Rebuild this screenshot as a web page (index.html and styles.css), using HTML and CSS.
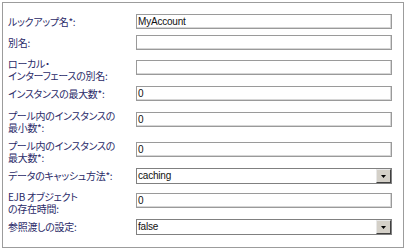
FILE: index.html
```html
<!DOCTYPE html>
<html lang="ja">
<head>
<meta charset="utf-8">
<link rel="stylesheet" href="styles.css">
</head>
<body>
<div class="panel">
  <div class="form">
    <div class="label one">ルックアップ名*:</div>
    <div class="field">MyAccount</div>

    <div class="label one">別名:</div>
    <div class="field"></div>

    <div class="label two"><span class="ln">ローカル・</span><span class="ln">インターフェースの別名:</span></div>
    <div class="field"></div>

    <div class="label one">インスタンスの最大数*:</div>
    <div class="field">0</div>

    <div class="label two"><span class="ln">プール内のインスタンスの</span><span class="ln">最小数*:</span></div>
    <div class="field">0</div>

    <div class="label two"><span class="ln">プール内のインスタンスの</span><span class="ln">最大数*:</span></div>
    <div class="field">0</div>

    <div class="label one">データのキャッシュ方法*:</div>
    <div class="field select">caching<span class="btn"><svg width="5" height="3" viewBox="0 0 5 3"><path d="M0 0h5L2.5 3z" fill="#000"/></svg></span></div>

    <div class="label two"><span class="ln">EJB オブジェクト</span><span class="ln">の存在時間:</span></div>
    <div class="field">0</div>

    <div class="label one">参照渡しの設定:</div>
    <div class="field select">false<span class="btn"><svg width="5" height="3" viewBox="0 0 5 3"><path d="M0 0h5L2.5 3z" fill="#000"/></svg></span></div>
  </div>
</div>
</body>
</html>
```
FILE: styles.css
```css
html, body {
  margin: 0;
  padding: 0;
  background: #fff;
}
.panel {
  margin: 2px 0 0 2px;
  width: 400px;
  height: 244px;
  border: 1px solid #9c9c9c;
  background: #fff;
}
.form {
  display: grid;
  grid-template-columns: 128px 256px;
  grid-template-rows: 21px 25px 26px 26px 30px 26px 25px 26px 15px;
  padding: 11px 0 0 5px;
}
.label {
  font-family: "Noto Sans CJK JP", sans-serif;
  font-feature-settings: "palt";
  font-size: 10px;
  line-height: 12px;
  letter-spacing: -0.3px;
  color: #2a2a68;
  white-space: nowrap;
  align-self: start;
}
.label .ln {
  display: block;
  height: 12px;
}
.label.one { margin-top: 2px; }
.label.two { margin-top: -2px; }
.field {
  box-sizing: border-box;
  height: 15px;
  border: 1px solid #9a9a9a;
  box-shadow: inset -1px -1px 0 #d6d6d6;
  background: #fff;
  font-family: "Liberation Sans", Arial, sans-serif;
  font-size: 10px;
  letter-spacing: -0.2px;
  line-height: 13px;
  color: #111;
  padding-left: 1px;
  align-self: start;
  position: relative;
}
.select {
  border-color: #808080;
  box-shadow: none;
  height: 16px;
  line-height: 14px;
}
.btn {
  position: absolute;
  right: 0;
  top: 0;
  width: 15px;
  height: 14px;
  box-sizing: border-box;
  background: #d4d0c8;
  border: 1px solid;
  border-color: #e8e8e8 #404040 #404040 #e8e8e8;
  display: flex;
  align-items: center;
  justify-content: center;
}
.btn svg { display: block; }
```
